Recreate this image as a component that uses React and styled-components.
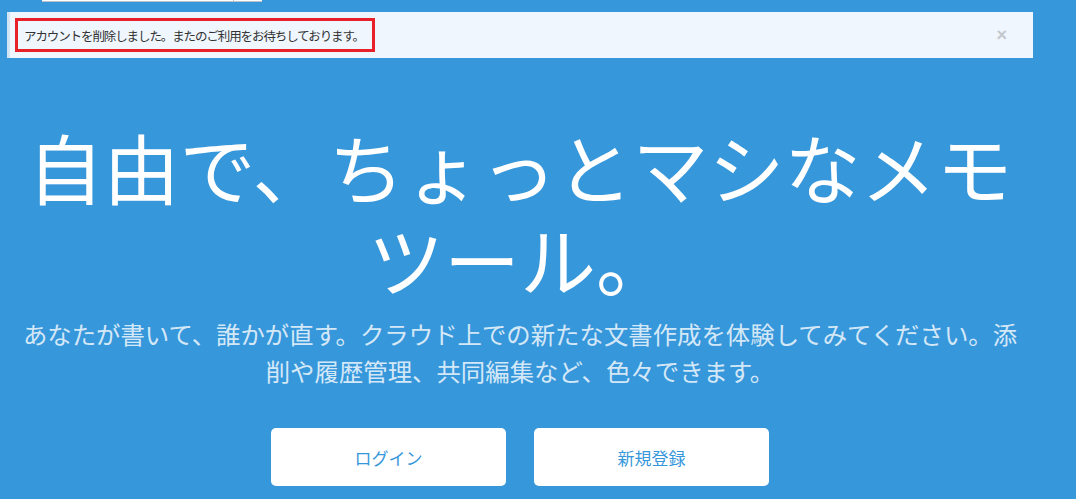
import React from 'react';
import styled, { createGlobalStyle } from 'styled-components';

const GlobalStyle = createGlobalStyle`
  html, body {
    margin: 0;
    padding: 0;
    background: #3797db;
  }
  body {
    font-family: 'Noto Sans CJK JP', 'Noto Sans', sans-serif;
  }
`;

const Wrapper = styled.div`
  width: 1026px;
  margin-left: 7px;
  display: flex;
  flex-direction: column;
`;

const TopBar = styled.div`
  display: flex;
  height: 2px;
  padding-left: 35px;
  margin-bottom: 10px;
`;

const SearchInput = styled.div`
  width: 191px;
  height: 1px;
  background: #fff;
  border-bottom: 1px solid #b9c2ca;
`;

const SearchButton = styled.div`
  width: 28px;
  height: 1px;
  background: #fff;
  border-left: 1px solid #b9c2ca;
  border-bottom: 1px solid #b9c2ca;
`;

const Alert = styled.div`
  display: flex;
  align-items: center;
  justify-content: space-between;
  height: 46px;
  box-sizing: border-box;
  padding: 0 26px 0 5px;
  background: #eff6fd;
  border-left: 3px solid #d3e4f3;
`;

const Highlight = styled.span`
  display: inline-flex;
  align-items: center;
  height: 34px;
  box-sizing: border-box;
  padding: 0 8px 0 6px;
  border: 3px solid #e8202a;
  font-size: 12.5px;
  letter-spacing: -1.1px;
  color: #333;
`;

const CloseButton = styled.button`
  border: none;
  background: none;
  padding: 0;
  font-family: 'Liberation Sans', Arial, sans-serif;
  font-size: 18px;
  font-weight: bold;
  line-height: 1;
  color: #c4c8cc;
  cursor: pointer;
`;

const Hero = styled.div`
  display: flex;
  flex-direction: column;
  align-items: center;
  text-align: center;
`;

const Headline = styled.h1`
  margin: 62px 0 0;
  font-size: 76px;
  font-weight: 400;
  line-height: 92px;
  color: #fff;
`;

const Lead = styled.p`
  max-width: 1010px;
  margin: 11px 0 0;
  font-size: 24.4px;
  line-height: 37px;
  color: rgba(255, 255, 255, 0.8);
`;

const ButtonRow = styled.div`
  display: flex;
  gap: 28px;
  margin-top: 39px;
`;

const HeroButton = styled.button`
  width: 235px;
  height: 58px;
  border: none;
  border-radius: 5px;
  background: #fff;
  color: #3797db;
  font-family: 'Noto Sans CJK JP', sans-serif;
  font-size: 17px;
  cursor: pointer;
`;

function App() {
  return (
    <>
      <GlobalStyle />
      <Wrapper>
        <TopBar>
          <SearchInput />
          <SearchButton />
        </TopBar>
        <Alert>
          <Highlight>アカウントを削除しました。またのご利用をお待ちしております。</Highlight>
          <CloseButton type='button'>×</CloseButton>
        </Alert>
        <Hero>
          <Headline>自由で、ちょっとマシなメモツール。</Headline>
          <Lead>
            あなたが書いて、誰かが直す。クラウド上での新たな文書作成を体験してみてください。添削や履歴管理、共同編集など、色々できます。
          </Lead>
          <ButtonRow>
            <HeroButton type='button'>ログイン</HeroButton>
            <HeroButton type='button'>新規登録</HeroButton>
          </ButtonRow>
        </Hero>
      </Wrapper>
    </>
  );
}

export default App;
